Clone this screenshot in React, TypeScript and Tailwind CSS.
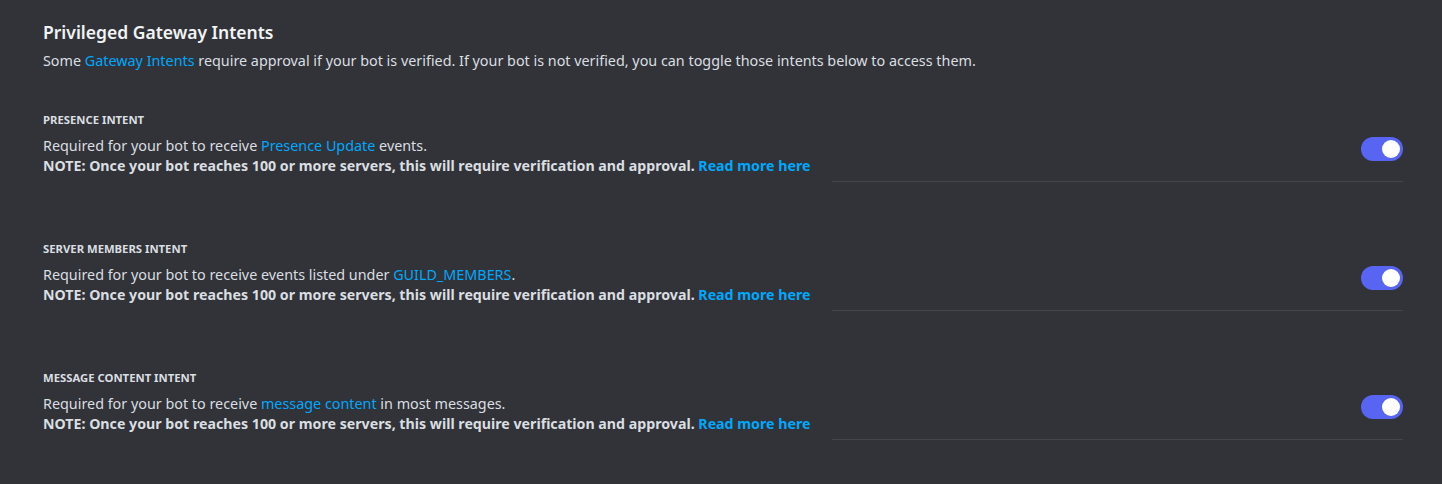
import React from "react";

const FONT = "font-['Noto_Sans','Open_Sans',sans-serif]";

const intents = [
  {
    label: "PRESENCE INTENT",
    before: "Required for your bot to receive ",
    link: "Presence Update",
    after: " events.",
  },
  {
    label: "SERVER MEMBERS INTENT",
    before: "Required for your bot to receive events listed under ",
    link: "GUILD_MEMBERS",
    after: ".",
  },
  {
    label: "MESSAGE CONTENT INTENT",
    before: "Required for your bot to receive ",
    link: "message content",
    after: " in most messages.",
  },
];

function Toggle() {
  return (
    <div className="w-[42px] h-[24px] rounded-full bg-[#5865f2] flex items-center justify-end px-[3px] shrink-0 mt-[1px]">
      <div className="w-[18px] h-[18px] rounded-full bg-white" />
    </div>
  );
}

export default function App() {
  return (
    <div className={`w-[1442px] h-[484px] bg-[#313338] text-[#dbdee1] ${FONT} px-[43px] pt-[20px] overflow-hidden`}>
      <div className="w-[1360px]">
        <h2 className="text-[17.5px] leading-[24px] font-semibold text-[#f2f3f5]">Privileged Gateway Intents</h2>
        <p className="text-[14.35px] leading-[20px] mt-[7px]">
          Some <span className="text-[#00a8fc]">Gateway Intents</span> require approval if your bot is verified. If your bot is not verified, you can toggle those intents below to access them.
        </p>

        <div className="mt-[41px] flex flex-col gap-[59px]">
          {intents.map((it) => (
            <div key={it.label}>
              <div className="text-[11.3px] leading-[16px] font-bold text-[#dbdee1]">{it.label}</div>
              <div className="flex items-start justify-between mt-[8px]">
                <div className="leading-[20px]">
                  <div className="text-[14.35px] h-[20px]">
                    {it.before}
                    <span className="text-[#00a8fc]">{it.link}</span>
                    {it.after}
                  </div>
                  <div className="text-[14.2px] h-[20px] font-bold">
                    NOTE: Once your bot reaches 100 or more servers, this will require verification and approval.{" "}
                    <span className="text-[#00a8fc]">Read more here</span>
                  </div>
                </div>
                <Toggle />
              </div>
              <div className="flex justify-end mt-[5px]">
                <div className="w-[571px] h-px bg-[#44464d]" />
              </div>
            </div>
          ))}
        </div>
      </div>
    </div>
  );
}
